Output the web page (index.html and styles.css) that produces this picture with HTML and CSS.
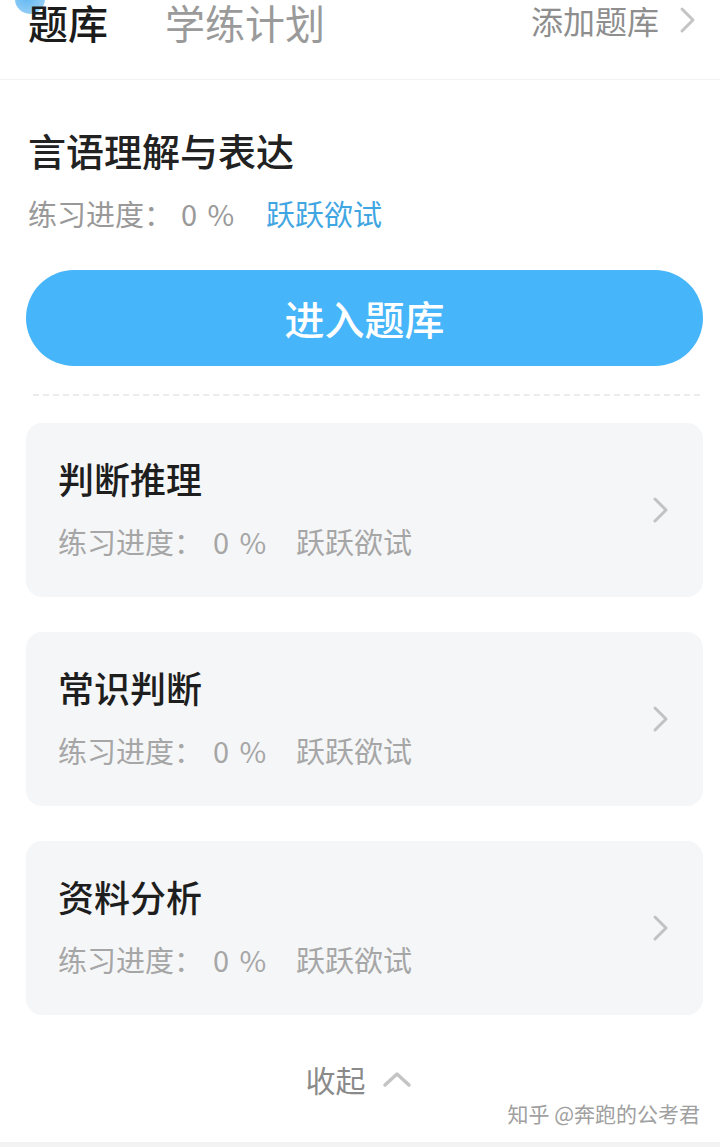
FILE: index.html
```html
<!DOCTYPE html>
<html lang="zh-CN">
<head>
    <meta charset="UTF-8">
    <meta name="viewport" content="width=device-width, initial-scale=1.0">
    <title>题库</title>
    <link rel="stylesheet" href="styles.css">
</head>
<body>

    <div class="header">
        <span class="dot"></span>
        <div class="tabs">
            <span class="tab active">题库</span>
            <span class="tab">学练计划</span>
        </div>
        <div class="add">
            添加题库
            <svg width="18" height="28" viewBox="0 0 18 28"><polyline points="3,3 14,14 3,25" fill="none" stroke="#c4c4c4" stroke-width="3" stroke-linecap="round" stroke-linejoin="round"/></svg>
        </div>
    </div>

    <div class="main">
        <div class="current">
            <h1>言语理解与表达</h1>
            <div class="progress">
                <span>练习进度：</span><span class="pct">0 %</span><span class="status blue">跃跃欲试</span>
            </div>
            <button class="enter">进入题库</button>
        </div>

        <div class="divider"></div>

        <!-- 其他题库 -->
        <div class="card">
            <div class="card-info">
                <h2>判断推理</h2>
                <div class="progress light">
                    <span>练习进度：</span><span class="pct">0 %</span><span class="status">跃跃欲试</span>
                </div>
            </div>
            <svg class="arrow" width="18" height="28" viewBox="0 0 18 28"><polyline points="3,3 14,14 3,25" fill="none" stroke="#c2c2c2" stroke-width="3" stroke-linecap="round" stroke-linejoin="round"/></svg>
        </div>

        <div class="card">
            <div class="card-info">
                <h2>常识判断</h2>
                <div class="progress light">
                    <span>练习进度：</span><span class="pct">0 %</span><span class="status">跃跃欲试</span>
                </div>
            </div>
            <svg class="arrow" width="18" height="28" viewBox="0 0 18 28"><polyline points="3,3 14,14 3,25" fill="none" stroke="#c2c2c2" stroke-width="3" stroke-linecap="round" stroke-linejoin="round"/></svg>
        </div>

        <div class="card">
            <div class="card-info">
                <h2>资料分析</h2>
                <div class="progress light">
                    <span>练习进度：</span><span class="pct">0 %</span><span class="status">跃跃欲试</span>
                </div>
            </div>
            <svg class="arrow" width="18" height="28" viewBox="0 0 18 28"><polyline points="3,3 14,14 3,25" fill="none" stroke="#c2c2c2" stroke-width="3" stroke-linecap="round" stroke-linejoin="round"/></svg>
        </div>

        <div class="collapse">
            收起
            <svg width="30" height="18" viewBox="0 0 30 18"><polyline points="3,15 15,4 27,15" fill="none" stroke="#c4c4c4" stroke-width="3.5" stroke-linecap="round" stroke-linejoin="round"/></svg>
        </div>
    </div>

    <div class="watermark">知乎 @奔跑的公考君</div>

</body>
</html>
```

FILE: styles.css
```css
body {
    margin: 0;
    font-family: "Noto Sans CJK SC", "Noto Sans", sans-serif;
    background-color: #ffffff;
    height: 1147px;
    position: relative;
    overflow: hidden;
    border-bottom: 5px solid #f3f3f3;
    box-sizing: border-box;
}
.header {
    height: 80px;
    display: flex;
    justify-content: space-between;
    align-items: flex-start;
    padding: 2px 23px 0 28px;
    border-bottom: 1px solid #f2f2f2;
    box-sizing: border-box;
    position: relative;
}
.dot {
    position: absolute;
    left: 15px;
    top: -16px;
    width: 30px;
    height: 30px;
    border-radius: 50%;
    background: radial-gradient(circle at 40% 40%, #5fb6f2, #a8d8f8);
}
.tabs {
    display: flex;
    gap: 57px;
    position: relative;
}
.tab {
    font-size: 40px;
    line-height: 40px;
    color: #9a9a9a;
}
.tab.active {
    color: #1c1c1c;
    font-weight: 500;
}
.add {
    display: flex;
    align-items: center;
    gap: 20px;
    font-size: 32px;
    line-height: 36px;
    color: #8e8e8e;
}
.main {
    padding: 0 17px 0 26px;
}
.current {
    padding-top: 46px;
}
h1 {
    margin: 0 0 0 2px;
    font-size: 38px;
    line-height: 48px;
    font-weight: 500;
    color: #222;
}
.progress {
    display: flex;
    font-size: 29px;
    line-height: 38px;
    color: #999;
    margin: 20px 0 0 2px;
}
.pct {
    margin-left: 8px;
    width: 85px;
    word-spacing: 4px;
}
.status.blue {
    color: #3fa6e2;
}
.enter {
    display: block;
    width: 100%;
    height: 96px;
    margin-top: 38px;
    border: none;
    border-radius: 48px;
    background-color: #46b5f9;
    color: white;
    font-family: inherit;
    font-size: 40px;
    font-weight: 500;
    cursor: pointer;
}
.divider {
    margin: 28px 3px 0 7px;
    border-top: 2px dashed #ececec;
}
.card {
    display: flex;
    justify-content: space-between;
    height: 174px;
    margin-top: 35px;
    padding: 33px 33px 0 32px;
    background-color: #f5f6f8;
    border-radius: 16px;
    box-sizing: border-box;
}
.divider + .card {
    margin-top: 27px;
}
h2 {
    margin: 0;
    font-size: 36px;
    line-height: 44px;
    font-weight: 500;
    color: #1e1e1e;
}
.progress.light {
    color: #a6a6a6;
    margin: 22px 0 0 0;
}
.progress.light .pct {
    margin-left: 10px;
    width: 83px;
}
.arrow {
    margin-top: 40px;
}
.collapse {
    display: flex;
    justify-content: center;
    align-items: center;
    gap: 16px;
    margin-top: 44px;
    padding-right: 12px;
    font-size: 30px;
    line-height: 40px;
    color: #8a8a8a;
}
.watermark {
    position: absolute;
    right: 20px;
    bottom: 14px;
    font-size: 21px;
    color: #a0a0a0;
    text-shadow: 0 0 2px #fff;
}
```
